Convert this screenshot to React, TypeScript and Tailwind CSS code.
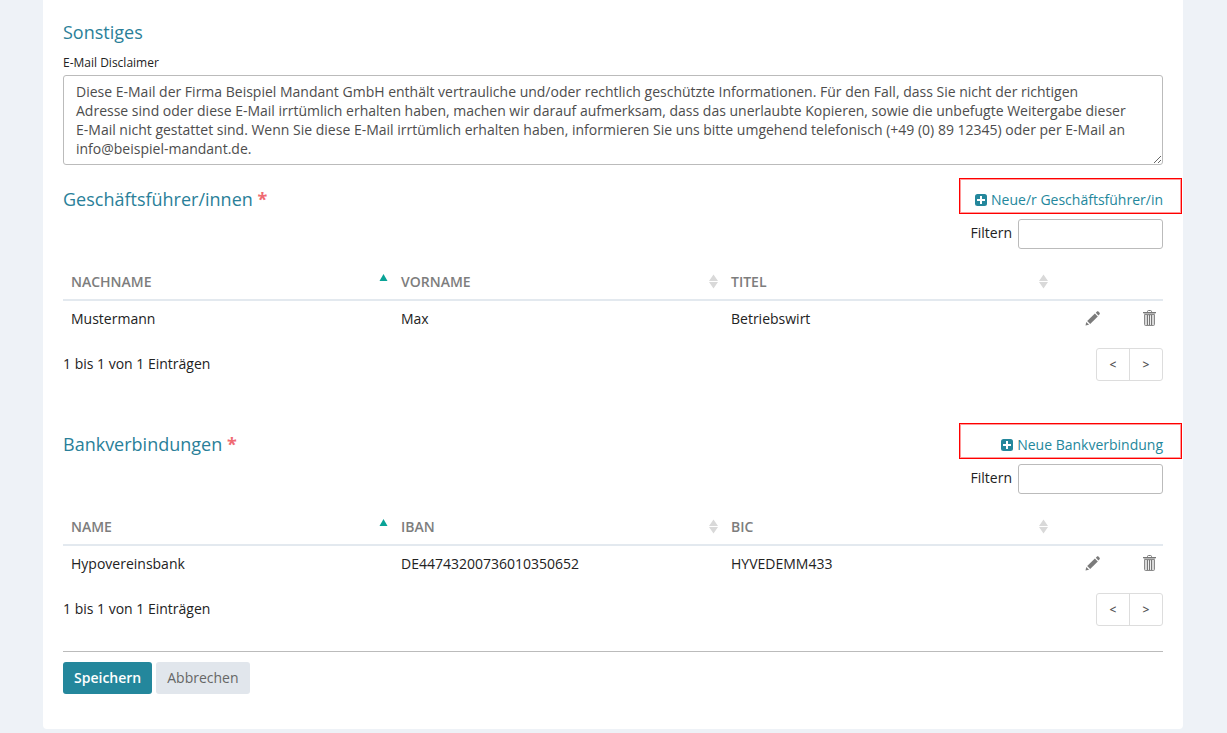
import { useState } from "react";

type Row = { id: string; cells: string[] };

type SectionProps = {
  id: string;
  title: string;
  addLabel: string;
  columns: string[];
  rows: Row[];
};

const managers: Row[] = [
  { id: "1", cells: ["Mustermann", "Max", "Betriebswirt"] },
];

const accounts: Row[] = [
  { id: "1", cells: ["Hypovereinsbank", "DE44743200736010350652", "HYVEDEMM433"] },
];

const disclaimer =
  "Diese E-Mail der Firma Beispiel Mandant GmbH enthält vertrauliche und/oder rechtlich geschützte Informationen. Für den Fall, dass Sie nicht der richtigen Adresse sind oder diese E-Mail irrtümlich erhalten haben, machen wir darauf aufmerksam, dass das unerlaubte Kopieren, sowie die unbefugte Weitergabe dieser E-Mail nicht gestattet sind. Wenn Sie diese E-Mail irrtümlich erhalten haben, informieren Sie uns bitte umgehend telefonisch (+49 (0) 89 12345) oder per E-Mail an info@beispiel-mandant.de.";

function PlusIcon() {
  return (
    <svg width="12" height="12" viewBox="0 0 12 12" aria-hidden="true">
      <rect width="12" height="12" rx="2.5" fill="#24879c" />
      <path d="M6 2v8M2 6h8" stroke="#fff" strokeWidth="2" />
    </svg>
  );
}

function SortIcon({ active }: { active: boolean }) {
  return (
    <svg width="10" height="16" viewBox="0 0 10 16" aria-hidden="true">
      {active ? (
        <path d="M4.5 0 8.5 7h-8z" fill="#0aa397" />
      ) : (
        <path d="M4.5 .5 9 7H0zM0 8h9L4.5 14.5z" fill="#d9d9d9" />
      )}
    </svg>
  );
}

function PencilIcon() {
  return (
    <svg width="16" height="16" viewBox="0 0 16 16" fill="#7b7b7b" aria-hidden="true">
      <path d="M.5 15.5l.8-3.6 2.8 2.8z" />
      <path d="M2.2 11 9.9 3.6l2.9 2.9-7.6 7.5z" />
      <path d="M10.8 2.8 12 1.6c.4-.4 1-.4 1.4 0l1.2 1.2c.4.4.4 1 0 1.4l-1.2 1.2z" />
    </svg>
  );
}

function TrashIcon() {
  return (
    <svg width="13" height="16" viewBox="0 0 13 16" fill="none" stroke="#8a8a8a" aria-hidden="true">
      <path d="M4.5 2V1.4c0-.5.4-.9.9-.9h2.2c.5 0 .9.4.9.9V2" stroke="#777" />
      <path d="M0 2.5h13" stroke="#777" />
      <path d="M.5 3.5h12" stroke="#b5b5b5" />
      <path d="M1.5 4.5h10v10c0 .6-.4 1-1 1h-8c-.6 0-1-.4-1-1z" fill="#d8d8d8" />
      <path d="M4.5 5v10M6.5 5v10M8.5 5v10" stroke="#777" />
      <path d="M5.5 6v8.500M7.5 6v8.500" stroke="#eee" />
    </svg>
  );
}

function Section({ id, title, addLabel, columns, rows }: SectionProps) {
  const [filter, setFilter] = useState("");

  const visible = rows.filter((row) =>
    row.cells.join(" ").toLowerCase().includes(filter.toLowerCase())
  );

  return (
    <section>
      <div className="flex items-center justify-between">
        <h2 className="pt-1.5 text-lg text-[#2a7f99]">
          {title} <span className="font-bold text-[#ef6a72]">*</span>
        </h2>
        <a
          href="#"
          className="-mr-[19px] flex h-9 w-[223px] items-center justify-end gap-1 border border-[#f00] pt-2 pr-[18px] text-[#24879c] ring-1 ring-[#f99] ring-inset"
        >
          <PlusIcon />
          {addLabel}
        </a>
      </div>
      <div className="mt-[5px] flex justify-end gap-1.5">
        <label htmlFor={id} className="pt-1">
          Filtern
        </label>
        <input
          id={id}
          type="text"
          value={filter}
          onChange={(e) => setFilter(e.target.value)}
          className="h-[30px] w-[145px] rounded-[3px] border border-[#bbb] px-2"
        />
      </div>
      <table className="mt-[15px] w-full table-fixed text-left">
        <thead>
          <tr className="h-9 border-b-2 border-[#e3e9ef] text-[#7d7d7d]">
            {columns.map((column, i) => (
              <th key={column} scope="col" className="w-[30%] pr-1 pl-2 font-semibold">
                <div className="flex items-center justify-between">
                  {column}
                  <SortIcon active={i === 0} />
                </div>
              </th>
            ))}
            <th className="w-[5%]"></th>
            <th className="w-[5%]"></th>
          </tr>
        </thead>
        <tbody>
          {visible.map((row) => (
            <tr key={row.id} className="h-9">
              {row.cells.map((cell) => (
                <td key={cell} className="px-2">
                  {cell}
                </td>
              ))}
              <td className="pr-[7px] pb-0.5">
                <button type="button" aria-label="Bearbeiten" className="ml-auto block">
                  <PencilIcon />
                </button>
              </td>
              <td className="pr-[7px] pb-0.5">
                <button type="button" aria-label="Löschen" className="ml-auto block">
                  <TrashIcon />
                </button>
              </td>
            </tr>
          ))}
        </tbody>
      </table>
      <div className="mt-3 flex justify-between">
        <p className="pt-1.5">1 bis 1 von 1 Einträgen</p>
        <div className="flex h-[33px] rounded-[3px] border border-[#ddd] text-xs text-[#555]">
          <button type="button" className="w-[33px] border-r border-[#ddd] font-semibold">
            &lt;
          </button>
          <button type="button" className="w-8 font-semibold">
            &gt;
          </button>
        </div>
      </div>
    </section>
  );
}

export default function App() {
  return (
    <div className="min-h-screen bg-[#eef2f7] pr-11 pb-1 pl-[43px] font-['Open_Sans',sans-serif] text-sm text-[#222]">
      <form
        onSubmit={(e) => e.preventDefault()}
        className="rounded-b-[4px] bg-white px-5 pt-[18px] pb-[35px]"
      >
        <h2 className="text-lg text-[#2a7f99]">Sonstiges</h2>
        <label htmlFor="disclaimer" className="mt-[9px] block text-xs">
          E-Mail Disclaimer
        </label>
        <textarea
          id="disclaimer"
          defaultValue={disclaimer}
          className="mt-1 block h-[90px] w-full rounded-[3px] border border-[#bbb] py-1.5 pr-8 pl-3 leading-[19px] text-[#4d4d4d]"
        />
        <div className="mt-[13px] flex flex-col gap-[42px]">
          <Section
            id="filter-managers"
            title="Geschäftsführer/innen"
            addLabel="Neue/r Geschäftsführer/in"
            columns={["NACHNAME", "VORNAME", "TITEL"]}
            rows={managers}
          />
          <Section
            id="filter-accounts"
            title="Bankverbindungen"
            addLabel="Neue Bankverbindung"
            columns={["NAME", "IBAN", "BIC"]}
            rows={accounts}
          />
        </div>
        <div className="mt-[25px] flex gap-1 border-t border-[#bbb] pt-2.5">
          <button
            type="submit"
            className="h-8 rounded-[3px] bg-[#24879c] px-[11px] font-semibold text-white"
          >
            Speichern
          </button>
          <button type="button" className="h-8 rounded-[3px] bg-[#e1e6ec] px-[11px] text-[#666]">
            Abbrechen
          </button>
        </div>
      </form>
    </div>
  );
}
